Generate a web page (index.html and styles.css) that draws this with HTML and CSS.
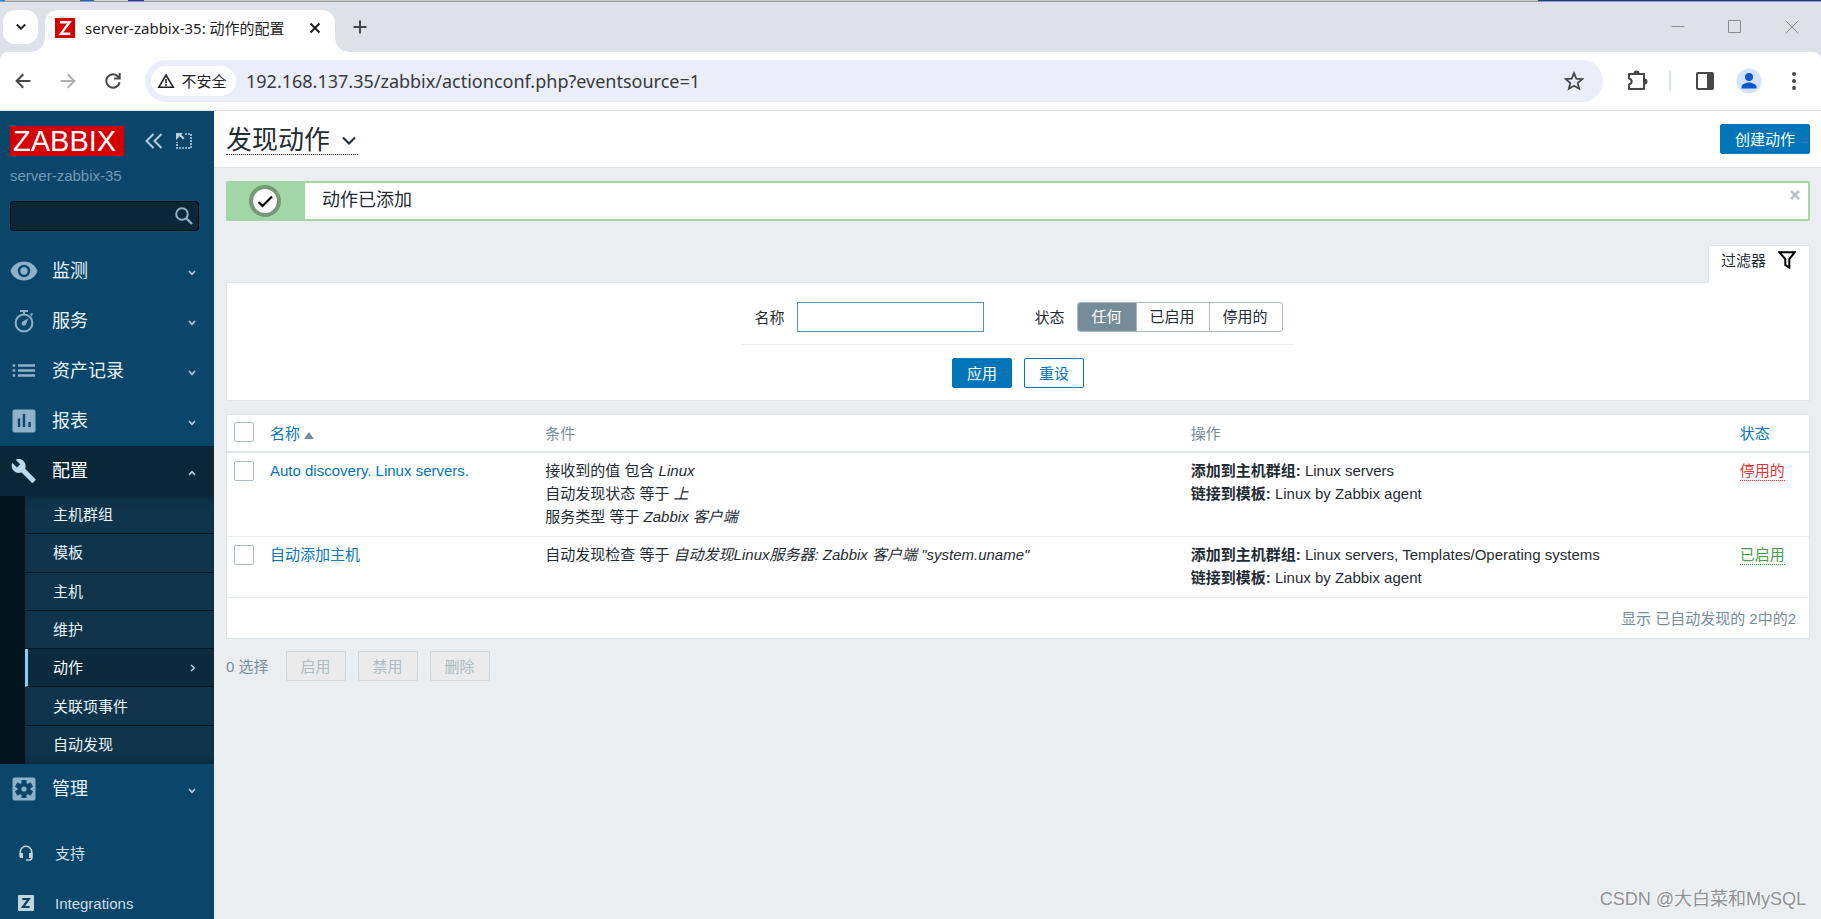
FILE: index.html
```html
<!DOCTYPE html>
<html lang="zh-CN">
<head>
<meta charset="utf-8">
<title>server-zabbix-35: 动作的配置</title>
<link rel="stylesheet" href="styles.css">
</head>
<body>
<div class="desktop-edge"></div>
<header class="browser">
  <div class="tabstrip">
    <button class="tab-search" aria-label="搜索标签页"><svg width="12" height="12" viewBox="0 0 12 12"><path d="M1.8 3.5 6 7.7l4.2-4.2" fill="none" stroke="#1f1f1f" stroke-width="2"/></svg></button>
    <div class="tab">
      <svg class="favicon" width="20" height="20" viewBox="0 0 20 20"><path fill="#d40000" d="M0 0h20v20H0z"/><path d="M5 4.300h9.500L6 15.700h9.300" fill="none" stroke="#fff" stroke-width="2.400"/></svg>
      <span class="tab-title">server-zabbix-35: 动作的配置</span>
      <button class="tab-close" aria-label="关闭"><svg width="12" height="12" viewBox="0 0 12 12"><path d="m1.500 1.500 9 9m0-9-9 9" stroke="#1f1f1f" stroke-width="2"/></svg></button>
    </div>
    <button class="new-tab" aria-label="新标签页"><svg width="14" height="14" viewBox="0 0 14 14"><path d="M7 .5v13M.5 7h13" stroke="#474747" stroke-width="2"/></svg></button>
    <div class="window-buttons">
      <button aria-label="最小化"><svg width="14" height="14" viewBox="0 0 14 14"><path d="M.5 6.500h13" stroke="#8a8c8f"/></svg></button>
      <button aria-label="最大化"><svg width="14" height="14" viewBox="0 0 14 14"><path d="M.5.5h12v12H.5z" fill="none" stroke="#8a8c8f"/></svg></button>
      <button aria-label="关闭窗口"><svg width="14" height="14" viewBox="0 0 14 14"><path d="m.5.5 13 13m0-13-13 13" stroke="#8a8c8f"/></svg></button>
    </div>
  </div>
  <div class="toolbar">
    <div class="nav-buttons">
      <button aria-label="后退"><svg width="16" height="16" viewBox="0 0 16 16"><path d="M15.500 8H2M8.300 1.300 1.600 8l6.700 6.700" fill="none" stroke="#474747" stroke-width="2"/></svg></button>
      <button aria-label="前进"><svg width="16" height="16" viewBox="0 0 16 16"><path d="M.5 8H14M7.700 1.300 14.400 8l-6.700 6.700" fill="none" stroke="#b0b0b0" stroke-width="2"/></svg></button>
      <button aria-label="重新加载"><svg width="16" height="16" viewBox="0 0 16 16"><path d="M14.600 9.200A6.700 6.700 0 1 1 13 3.500l1.500 1.700" fill="none" stroke="#474747" stroke-width="2"/><path d="M15.700 0v6.500H9.200v-2h4.500V0z" fill="#474747"/></svg></button>
    </div>
    <div class="omnibox">
      <button class="chip"><svg width="18" height="16" viewBox="0 0 18 16"><path d="M9 2 16.200 14.200H1.800z" fill="none" stroke="#1f1f1f" stroke-width="1.600"/><path d="M9 6v4m0 1v2" stroke="#1f1f1f" stroke-width="1.500"/></svg><span>不安全</span></button>
      <input class="url" type="text" aria-label="地址" value="192.168.137.35/zabbix/actionconf.php?eventsource=1">
      <button class="star" aria-label="收藏"><svg width="20" height="20" viewBox="0 0 20 20"><path d="m10 2.200 2.300 5.400 5.900.5-4.500 3.900 1.400 5.700L10 14.700l-5.100 3 1.400-5.700L1.800 8.100l5.900-.5z" fill="none" stroke="#474747" stroke-width="1.800"/></svg></button>
    </div>
    <div class="tools">
      <button aria-label="扩展程序"><svg width="22" height="22" viewBox="0 0 22 22"><path d="M3 4h15v15H3v-4.500c3.500-1 3.500-5 0-6z" fill="none" stroke="#474747" stroke-width="2" stroke-linejoin="round"/><path d="M7.500 3.500a3 3 0 0 1 6 0zM18.500 8.500a3 3 0 0 1 0 6z" fill="#474747"/></svg></button>
      <span class="divider"></span>
      <button aria-label="侧边栏"><svg width="20" height="20" viewBox="0 0 20 20"><rect x="2" y="2" width="16" height="16" rx="1" fill="none" stroke="#474747" stroke-width="2"/><path d="M12 2h6v16h-6z" fill="#474747"/></svg></button>
      <button aria-label="用户"><svg width="26" height="26" viewBox="0 0 26 26"><circle cx="13" cy="13" r="12.500" fill="#d3e3fd"/><circle cx="13" cy="9" r="4" fill="#0b57d0"/><path d="M5.500 20.500V19c0-3 5-4.500 7.500-4.500s7.500 1.500 7.500 4.500v1.500z" fill="#0b57d0"/></svg></button>
      <button aria-label="菜单"><svg width="6" height="20" viewBox="0 0 6 20"><g fill="#474747"><circle cx="3" cy="3" r="2"/><circle cx="3" cy="10" r="2"/><circle cx="3" cy="17" r="2"/></g></svg></button>
    </div>
  </div>
</header>

<div class="app">
  <aside class="sidebar">
    <div class="brand">
      <a class="logo" href="#">ZABBIX</a>
      <button aria-label="折叠侧边栏"><svg width="18" height="16" viewBox="0 0 18 16"><path d="M8.500 1 1.500 8l7 7M16.500 1l-7 7 7 7" fill="none" stroke="#b4cfe0" stroke-width="2"/></svg></button>
      <button aria-label="隐藏侧边栏"><svg width="16" height="16" viewBox="0 0 16 16"><path d="M9 1h6v14H1V9" fill="none" stroke="#b4cfe0" stroke-width="1.600" stroke-dasharray="2 1"/><path d="M0 0h7L5.200 1.800 8.500 5 7 6.500 3.700 3.300 0 7z" fill="#b4cfe0"/></svg></button>
    </div>
    <div class="server-name">server-zabbix-35</div>
    <form class="search">
      <input type="text" aria-label="搜索">
      <button type="button" aria-label="搜索"><svg width="18" height="18" viewBox="0 0 18 18"><circle cx="7" cy="7" r="5.800" fill="none" stroke="#8fb3ca" stroke-width="2"/><path d="m11 11 6 6" stroke="#8fb3ca" stroke-width="2.400"/></svg></button>
    </form>
    <nav class="menu">
      <a class="item" href="#"><svg class="icon" width="28" height="24" viewBox="0 0 28 24"><path fill-rule="evenodd" d="M14 2.500C7.500 2.500 2.300 6.500.5 12c1.800 5.500 7 9.500 13.500 9.500S25.700 17.500 27.500 12C25.700 6.500 20.500 2.500 14 2.500zm0 3.300a6.200 6.200 0 1 1 0 12.400 6.200 6.200 0 0 1 0-12.400z" fill="#8cb1c9"/><circle cx="14" cy="12" r="3.700" fill="#8cb1c9"/></svg><span>监测</span><svg class="arrow" width="8" height="6" viewBox="0 0 8 6"><path d="m1 1 3 3.300L7 1"/></svg></a>
      <a class="item" href="#"><svg class="icon" width="28" height="24" viewBox="0 0 28 24"><circle cx="14" cy="14" r="8.400" fill="none" stroke="#8cb1c9" stroke-width="2"/><path d="M10 1h8v2h-3v3h-2V3h-3zM20 5l2-1 1 1-1.500 2.500zM18.500 9.500 16 15.200a2.300 2.300 0 1 1-3-3z" fill="#8cb1c9"/></svg><span>服务</span><svg class="arrow" width="8" height="6" viewBox="0 0 8 6"><path d="m1 1 3 3.300L7 1"/></svg></a>
      <a class="item" href="#"><svg class="icon" width="28" height="24" viewBox="0 0 28 24"><path d="M8 6.500h17M8 11.500h17M8 16.500h17" stroke="#8cb1c9" stroke-width="2.400"/><path d="M2.700 6.500h2.500M2.700 11.500h2.500M2.700 16.500h2.500" stroke="#8cb1c9" stroke-width="2.600"/></svg><span>资产记录</span><svg class="arrow" width="8" height="6" viewBox="0 0 8 6"><path d="m1 1 3 3.300L7 1"/></svg></a>
      <a class="item" href="#"><svg class="icon" width="28" height="24" viewBox="0 0 28 24"><rect x="2.500" y=".5" width="23" height="23" rx="2" fill="#8cb1c9"/><path d="M9 9.500V18M14 5v13M19.500 13v5" stroke="#0a466a" stroke-width="2.400"/></svg><span>报表</span><svg class="arrow" width="8" height="6" viewBox="0 0 8 6"><path d="m1 1 3 3.300L7 1"/></svg></a>
      <a class="item open" href="#"><svg class="icon" width="28" height="24" viewBox="0 0 28 24"><path transform="translate(2)" d="M23.300 20 13.200 9.800c1-2.600.4-5.600-1.700-7.700C9.400 0 6.200-.4 3.600.7L8.200 5.300 5 8.500.3 3.900C-.9 6.400-.3 9.700 1.800 11.800c2.100 2.100 5.100 2.700 7.700 1.700l10.100 10.100c.5.500 1.100.5 1.600 0l2-2.100c.6-.4.600-1.200.1-1.500z" fill="#b9daef"/></svg><span>配置</span><svg class="arrow" width="8" height="6" viewBox="0 0 8 6"><path d="m1 5 3-3.300L7 5"/></svg></a>
      <div class="submenu">
        <a href="#">主机群组</a>
        <a href="#">模板</a>
        <a href="#">主机</a>
        <a href="#">维护</a>
        <a class="current" href="#">动作<svg class="arrow" width="6" height="8" viewBox="0 0 6 8"><path d="m1 1 3.300 3L1 7"/></svg></a>
        <a href="#">关联项事件</a>
        <a href="#">自动发现</a>
      </div>
      <a class="item" href="#"><svg class="icon" width="28" height="24" viewBox="0 0 28 24"><rect x="2.500" y=".5" width="23" height="23" rx="2" fill="#8cb1c9"/><g stroke="#0a466a" stroke-width="5"><path d="M14 3v18M6.200 7.500l15.600 9M21.800 7.500l-15.600 9"/></g><circle cx="14" cy="12" r="6.300" fill="#0a466a"/><circle cx="14" cy="12" r="2.600" fill="#8cb1c9"/></svg><span>管理</span><svg class="arrow" width="8" height="6" viewBox="0 0 8 6"><path d="m1 1 3 3.300L7 1"/></svg></a>
    </nav>
    <nav class="menu-extra">
      <a href="#"><svg width="16" height="16" viewBox="0 0 16 16"><path d="M2.300 10V7a5.700 5.700 0 0 1 11.400 0v6.500c0 1-1 1.500-3 1.500H8" fill="none" stroke="#c3d4de" stroke-width="1.600"/><path d="M1.500 8h3.500v5H3a1.500 1.500 0 0 1-1.500-1.500zM11 8h3.500v5H11z" fill="#c3d4de"/></svg><span>支持</span></a>
      <a href="#"><svg width="16" height="16" viewBox="0 0 16 16"><rect width="16" height="16" rx="1" fill="#c3d4de"/><path d="M4.300 4h6.500L5 12h6.700" fill="none" stroke="#0a466a" stroke-width="2.200"/></svg><span>Integrations</span></a>
    </nav>
  </aside>

  <main class="content">
    <div class="page-header">
      <h1><button class="title">发现动作<svg width="14" height="10" viewBox="0 0 14 10"><path d="m1 1.500 6 6 6-6" fill="none" stroke="#1f2c33" stroke-width="2"/></svg></button></h1>
      <button class="btn primary">创建动作</button>
    </div>

    <div class="message" role="status">
      <div class="message-icon"><svg width="32" height="32" viewBox="0 0 32 32"><circle cx="16" cy="16" r="14" fill="#fff" stroke="#749976" stroke-width="4"/><path d="m9.500 17 4 4L23 11.500" fill="none" stroke="#000" stroke-width="2.200"/></svg></div>
      <div class="message-text">动作已添加</div>
      <button class="message-close" aria-label="关闭"><svg width="10" height="10" viewBox="0 0 10 10"><path d="m1 1 8 8m0-8-8 8" stroke="#b9c6cc" stroke-width="3"/></svg></button>
    </div>

    <div class="filter-tab"><a href="#">过滤器<svg width="18" height="18" viewBox="0 0 18 18"><path d="M1.200 1.200h15.600L11.300 8v8.500l-4-2.500V8z" fill="none" stroke="#000" stroke-width="2"/></svg></a></div>
    <form class="filter">
      <div class="filter-fields">
        <label for="f-name">名称</label>
        <input id="f-name" class="text" type="text">
        <span id="f-status" class="status-label">状态</span>
        <div class="segmented" role="radiogroup" aria-labelledby="f-status">
          <label><input type="radio" name="status" checked><span>任何</span></label>
          <label><input type="radio" name="status"><span>已启用</span></label>
          <label><input type="radio" name="status"><span>停用的</span></label>
        </div>
      </div>
      <div class="filter-actions">
        <button type="button" class="btn primary">应用</button>
        <button type="button" class="btn">重设</button>
      </div>
    </form>

    <div class="list">
      <table>
        <colgroup><col class="c-check"><col class="c-name"><col class="c-cond"><col class="c-oper"><col></colgroup>
        <thead>
          <tr><th><input type="checkbox" aria-label="全选"></th><th><a href="#">名称<span class="sort"></span></a></th><th>条件</th><th>操作</th><th><a href="#">状态</a></th></tr>
        </thead>
        <tbody>
          <tr>
            <td><input type="checkbox" aria-label="Auto discovery. Linux servers."></td>
            <td><a href="#">Auto discovery. Linux servers.</a></td>
            <td>接收到的值 包含 <em>Linux</em><br>自动发现状态 等于 <em>上</em><br>服务类型 等于 <em>Zabbix 客户端</em></td>
            <td><b>添加到主机群组:</b> Linux servers<br><b>链接到模板:</b> Linux by Zabbix agent</td>
            <td><a class="state off" href="#">停用的</a></td>
          </tr>
          <tr>
            <td><input type="checkbox" aria-label="自动添加主机"></td>
            <td><a href="#">自动添加主机</a></td>
            <td>自动发现检查 等于 <em>自动发现Linux服务器: Zabbix 客户端 "system.uname"</em></td>
            <td><b>添加到主机群组:</b> Linux servers, Templates/Operating systems<br><b>链接到模板:</b> Linux by Zabbix agent</td>
            <td><a class="state on" href="#">已启用</a></td>
          </tr>
        </tbody>
      </table>
      <div class="list-footer">显示 已自动发现的 2中的2</div>
    </div>

    <div class="bulk">
      <span>0 选择</span>
      <button class="btn" disabled>启用</button>
      <button class="btn" disabled>禁用</button>
      <button class="btn" disabled>删除</button>
    </div>
    <div class="watermark">CSDN @大白菜和MySQL</div>
  </main>
</div>
</body>
</html>
```
FILE: styles.css
```css
* { box-sizing: border-box; }
body {
  margin: 0;
  height: 100vh;
  display: flex;
  flex-direction: column;
  overflow: hidden;
  font: 15px/23px "Liberation Sans", "Noto Sans CJK SC", sans-serif;
  color: #1f2c33;
}
button, input { font: inherit; color: inherit; margin: 0; }
button { padding: 0; border: 0; background: none; display: flex; align-items: center; justify-content: center; }
a { color: #0275b8; text-decoration: none; }
svg { display: block; flex: none; }

/* Browser window */
.desktop-edge {
  flex: none;
  height: 2px;
  border-bottom: 1px solid #97999c;
  background: linear-gradient(90deg, #0a8fd8 0 5px, #c9cac6 5px 80px, #1a66d8 80px 94px, #d8d8d6 94px 128px, #2b2bd8 128px 144px, #c9cac6 144px 1538px, #0a3da8 1538px);
}
.browser { flex: none; background: #dee2e8; font-family: "Noto Sans", "Noto Sans CJK SC", sans-serif; }
.tabstrip { display: flex; height: 50px; padding: 8px 0 0 3px; }
.tab-search { width: 35px; height: 34px; border-radius: 12px; background: #fff; }
.tab {
  position: relative;
  display: flex;
  align-items: center;
  width: 290px;
  margin-left: 7px;
  padding: 0 14px 6px 10px;
  border-radius: 13px 13px 0 0;
  background: #fff;
}
.tab::before, .tab::after { content: ""; position: absolute; bottom: 0; width: 13px; height: 13px; }
.tab::before { right: 100%; background: radial-gradient(circle at 0 0, transparent 12px, #fff 13px); }
.tab::after { left: 100%; background: radial-gradient(circle at 100% 0, transparent 12px, #fff 13px); }
.tab-title { flex: 1; margin-left: 10px; font-size: 15px; color: #1f1f1f; white-space: nowrap; }
.new-tab { width: 32px; height: 34px; margin-left: 9px; }
.window-buttons { display: flex; gap: 43px; height: 34px; margin-left: auto; padding-right: 22px; }
.toolbar {
  display: flex;
  align-items: center;
  height: 59px;
  padding: 0 24px 0 15px;
  border-bottom: 1px solid #dfe1e4;
  border-radius: 8px 8px 0 0;
  background: #fff;
}
.nav-buttons { display: flex; gap: 29px; width: 130px; }
.omnibox { flex: 1; display: flex; align-items: center; height: 42px; padding: 0 19px 0 6px; border-radius: 21px; background: #ebeef8; }
.chip { gap: 6px; height: 30px; width: 85px; padding-right: 3px; border-radius: 15px; background: #fff; font-size: 15px; color: #1f1f1f; }
.url { flex: 1; height: 30px; margin-left: 10px; padding: 0; border: 0; background: none; font-size: 18px; color: #37393d; outline: 0; }
.tools { display: flex; align-items: center; margin-left: 23px; }
.divider { width: 2px; height: 20px; margin: 0 24px 0 21px; background: #d3e3fd; }
.tools button + button { margin-left: 21px; }
.tools button:last-child { margin-left: 29px; }

/* Layout */
.app { flex: 1; min-height: 0; display: flex; }
.sidebar { flex: none; width: 214px; overflow: hidden; background: #0a466a; }
.content { position: relative; flex: 1; min-width: 0; background: #ebeef0; }

/* Sidebar */
.brand { display: flex; align-items: center; padding: 15px 22px 0 10px; }
.brand button { margin-left: 21px; }
.brand button + button { margin-left: 13px; }
.logo { width: 114px; height: 30px; padding-left: 3px; background: #d40000; color: #fff; font-size: 29px; line-height: 30px; }
.server-name { margin: 8px 10px 0; color: #6f9bb5; }
.search { display: flex; height: 30px; margin: 14px 15px 15px 10px; padding-right: 5px; border: 1px solid #02080c; border-radius: 3px; background: #0a2737; }
.search input { flex: 1; min-width: 0; border: 0; background: none; outline: 0; }
.item { display: flex; align-items: center; height: 50px; padding: 0 18px 0 10px; font-size: 18px; color: #e8f3fa; }
.item span { flex: 1; margin-left: 14px; }
.item .arrow { margin-top: 3px; }
.arrow path { fill: none; stroke: #b9d2e1; stroke-width: 1.5; }
.item.open { background: #0a2737; color: #fff; }
.submenu { display: grid; grid-auto-rows: 1fr; min-height: 268px; border-left: 25px solid #04141d; background: #0f344c; box-shadow: inset 0 8px 8px -6px #0a2737, inset 0 -8px 8px -6px #0a2737; }
.submenu a { display: flex; align-items: center; justify-content: space-between; padding: 0 18px 0 28px; border-bottom: 1px solid #04141d; color: #e8f3fa; }
.submenu a:last-child { border-bottom: 0; }
.submenu .current { padding-left: 25px; border-left: 3px solid #87ceff; background: #0b2a3d; color: #fff; }
.menu-extra { margin-top: 14px; }
.menu-extra a { display: flex; align-items: center; gap: 21px; height: 50px; padding-left: 18px; color: #d0dee7; }

/* Page */
.page-header { display: flex; align-items: flex-start; justify-content: space-between; height: 57px; padding: 13px 11px 0 12px; border-bottom: 1px solid #dfe4e7; background: #fff; }
h1 { margin: 0; font: inherit; }
.title { gap: 12px; height: 31px; padding: 3px 2px 0 0; border-bottom: 1px dotted #1f2c33; font-size: 26px; line-height: 27px; }
.btn { height: 30px; padding: 0 14px; border: 1px solid #0275b8; border-radius: 2px; background: #fff; color: #0275b8; white-space: nowrap; }
.btn.primary { background: #0275b8; color: #fff; }
.btn:disabled { border-color: #ccd5d9; background: #ebebeb; color: #acbbc2; }
.message { display: flex; height: 40px; margin: 13px 11px 0 12px; border: 2px solid #a3d6a7; border-radius: 2px; background: #fff; }
.message-icon { display: flex; align-items: center; justify-content: center; width: 77px; padding-right: 3px; background: #a3d6a7; }
.message-text { flex: 1; padding: 6px 17px; font-size: 18px; }
.message-close { width: 10px; height: 10px; margin: 7px 8px 0 0; }
.filter-tab { display: flex; justify-content: flex-end; margin: 24px 11px 0 12px; }
.filter-tab a { position: relative; display: flex; gap: 12px; height: 38px; margin-bottom: -1px; padding: 3px 13px 0 12px; border: 1px solid #dfe4e7; border-bottom: 0; border-radius: 2px 2px 0 0; background: #fff; color: #1f2c33; }
.filter-tab svg { margin-top: 2px; }
.filter { display: flex; flex-direction: column; align-items: center; height: 119px; margin: 0 11px 0 12px; padding-top: 19px; border: 1px solid #dfe4e7; background: #fff; }
.filter-fields { display: flex; align-items: center; padding: 0 11px 12px 12px; border-bottom: 1px solid #ebeef0; }
.text { width: 187px; height: 30px; margin-left: 13px; padding: 0 5px; border: 1px solid #5892b3; background: #fff; outline: 0; }
.status-label { margin: 0 13px 0 50px; }
.segmented { display: flex; height: 30px; border: 1px solid #acbbc2; border-radius: 3px; overflow: hidden; }
.segmented label { position: relative; display: flex; }
.segmented label + label { border-left: 1px solid #acbbc2; }
.segmented input { position: absolute; opacity: 0; }
.segmented span { padding: 2px 14px 2px 13px; line-height: 24px; }
.segmented input:checked + span { background: #768d99; color: #fff; }
.filter-actions { display: flex; gap: 12px; margin-top: 13px; }
.list { margin: 13px 11px 0 12px; border: 1px solid #dfe4e7; background: #fff; }
table { width: 100%; table-layout: fixed; border-collapse: separate; border-spacing: 0; }
.c-check { width: 36px; }
.c-name { width: 17.4%; }
.c-cond { width: 40.8%; }
.c-oper { width: 34.7%; }
th, td { padding: 7px; text-align: left; vertical-align: top; font-weight: 400; }
th { padding-bottom: 6px; border-bottom: 2px solid #dfe4e7; color: #768d99; }
td { padding: 6px 7px 8px; border-bottom: 1px solid #ebeef0; }
table input { appearance: none; display: block; width: 20px; height: 20px; border: 1px solid #acbbc2; border-radius: 2px; background: #fff; }
td input { margin-top: 2px; }
.sort { display: inline-block; margin-left: 4px; border: 5px solid transparent; border-top: 0; border-bottom: 7px solid #768d99; }
.state { display: inline-block; line-height: 19px; border-bottom: 1px dotted; }
.off { color: #e33734; }
.on { color: #429e47; }
.list-footer { padding: 9px 13px 8px; text-align: right; color: #768d99; }
.bulk { display: flex; align-items: center; gap: 12px; margin: 12px 12px 0; color: #768d99; }
.bulk span { margin-right: 5px; }
.watermark { position: absolute; right: 15px; bottom: 8px; font-size: 18px; color: #8d9194; text-shadow: -1px -1px 0 #fff; }
```
